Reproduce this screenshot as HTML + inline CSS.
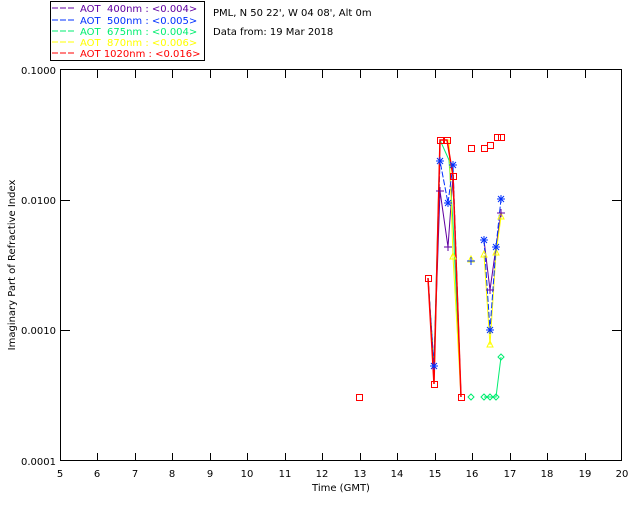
<!DOCTYPE html>
<html><head><meta charset="utf-8"><style>
html,body{margin:0;padding:0;background:#fff;}
svg{display:block;font-family:"DejaVu Sans","Liberation Sans",sans-serif;}
</style></head><body>
<svg width="640" height="512" viewBox="0 0 640 512" xmlns="http://www.w3.org/2000/svg">
<rect width="640" height="512" fill="#fff"/>
<rect x="50.5" y="1.5" width="154" height="59" fill="none" stroke="#000" stroke-width="1"/>
<g font-size="10">
<line x1="52" y1="8" x2="74" y2="8" stroke="#6000a0" stroke-dasharray="6,2"/>
<text x="80" y="12" fill="#6000a0" xml:space="preserve">AOT  400nm : &lt;0.004&gt;</text>
<line x1="52" y1="20" x2="74" y2="20" stroke="#0030ff" stroke-dasharray="6,2"/>
<text x="80" y="24" fill="#0030ff" xml:space="preserve">AOT  500nm : &lt;0.005&gt;</text>
<line x1="52" y1="31" x2="74" y2="31" stroke="#00ee70" stroke-dasharray="6,2"/>
<text x="80" y="35" fill="#00ee70" xml:space="preserve">AOT  675nm : &lt;0.004&gt;</text>
<line x1="52" y1="42" x2="74" y2="42" stroke="#ffff00" stroke-dasharray="6,2"/>
<text x="80" y="46" fill="#ffff00" xml:space="preserve">AOT  870nm : &lt;0.006&gt;</text>
<line x1="52" y1="53" x2="74" y2="53" stroke="#ff0000" stroke-dasharray="6,2"/>
<text x="80" y="57" fill="#ff0000" xml:space="preserve">AOT 1020nm : &lt;0.016&gt;</text>
</g>
<g font-size="10" fill="#000">
<text x="213" y="16">PML, N 50 22', W 04 08', Alt 0m</text>
<text x="213" y="35">Data from: 19 Mar 2018</text>
</g>
<rect x="60.5" y="69.5" width="561" height="391" fill="none" stroke="#000" stroke-width="1"/>
<g stroke="#000" stroke-width="1">
<path d="M97.5 461v-8M135.5 461v-8M172.5 461v-8M210.5 461v-8M247.5 461v-8M285.5 461v-8M322.5 461v-8M360.5 461v-8M397.5 461v-8M435.5 461v-8M472.5 461v-8M510.5 461v-8M547.5 461v-8M585.5 461v-8"/>
<path d="M97.5 70v8M135.5 70v8M172.5 70v8M210.5 70v8M247.5 70v8M285.5 70v8M322.5 70v8M360.5 70v8M397.5 70v8M435.5 70v8M472.5 70v8M510.5 70v8M547.5 70v8M585.5 70v8"/>
<path d="M60 200.5h10M60 330.5h10M622 200.5h-10M622 330.5h-10"/>
</g>
<g font-size="10" fill="#000" text-anchor="middle">
<text x="60" y="477">5</text><text x="97" y="477">6</text><text x="135" y="477">7</text><text x="172" y="477">8</text><text x="210" y="477">9</text><text x="247" y="477">10</text><text x="285" y="477">11</text><text x="322" y="477">12</text><text x="360" y="477">13</text><text x="397" y="477">14</text><text x="435" y="477">15</text><text x="472" y="477">16</text><text x="510" y="477">17</text><text x="547" y="477">18</text><text x="585" y="477">19</text><text x="622" y="477">20</text>
<text x="341" y="491">Time (GMT)</text>
</g>
<g font-size="10" fill="#000" text-anchor="end">
<text x="56" y="74">0.1000</text><text x="56" y="204">0.0100</text><text x="56" y="334">0.0010</text><text x="56" y="465">0.0001</text>
</g>
<text transform="translate(15,265) rotate(-90)" font-size="10" text-anchor="middle" fill="#000">Imaginary Part of Refractive Index</text>
<g fill="none" stroke-width="1">
<polyline stroke="#6000a0" points="428,278 434,366 440,191 448,247 453,176 461,397"/>
<polyline stroke="#6000a0" points="484,240 490,290 496,247 501,213"/>
<polyline stroke="#00ee70" points="428,278 434,366 440,140 449,160 453,223 461,397"/>
<polyline stroke="#00ee70" points="484,397 496,397 501,357"/>
<polyline stroke="#ffff00" points="428,278 434,384 440,140 449,140 453,257 461,397"/>
<polyline stroke="#ffff00" points="484,255 490,345 496,253 501,217"/>
<polyline stroke="#0030ff" stroke-dasharray="6,2" points="428,278 434,366 440,161 448,203 453,165 461,397"/>
<polyline stroke="#0030ff" stroke-dasharray="6,2" points="484,240 490,330 496,247 501,199"/>
<polyline stroke="#ff0000" stroke-width="1.5" points="428,278 434,384 440,140 447,140 453,176 461,397"/>
</g>
<path fill="none" stroke="#ff0000" stroke-width="1" d="M356.5 394.5h6v6h-6z M425.5 275.5h6v6h-6z M431.5 381.5h6v6h-6z M437.5 137.5h6v6h-6z M444.5 137.5h6v6h-6z M450.5 173.5h6v6h-6z M458.5 394.5h6v6h-6z M468.5 145.5h6v6h-6z M481.5 145.5h6v6h-6z M487.5 142.5h6v6h-6z M494.5 134.5h6v6h-6z M498.5 134.5h6v6h-6z"/>
<g fill="none" stroke="#00ee70" stroke-width="1">
<path d="M471 394l3 3-3 3-3-3z M484 394l3 3-3 3-3-3z M490 394l3 3-3 3-3-3z M496 394l3 3-3 3-3-3z M501 354l3 3-3 3-3-3z"/>
</g>
<g fill="none" stroke="#ffff00" stroke-width="1">
<path d="M471 256l3 6h-6z M484 251l3 6h-6z M496 249l3 6h-6z M501 213l3 6h-6z M490 341l3 6h-6z M453 253l3 6h-6z"/>
</g>
<g stroke="#0030ff" stroke-width="1">
<path d="M436 161h8M440 157v8M437 158l6 6M443 158l-6 6"/>
<path d="M449 165h8M453 161v8M450 162l6 6M456 162l-6 6"/>
<path d="M444 203h8M448 199v8M445 200l6 6M451 200l-6 6"/>
<path d="M430 366h8M434 362v8M431 363l6 6M437 363l-6 6"/>
<path d="M467 261h8M471 257v8"/>
<path d="M480 240h8M484 236v8M481 237l6 6M487 237l-6 6"/>
<path d="M492 247h8M496 243v8M493 244l6 6M499 244l-6 6"/>
<path d="M486 330h8M490 326v8M487 327l6 6M493 327l-6 6"/>
<path d="M497 199h8M501 195v8M498 196l6 6M504 196l-6 6"/>
</g>
<g stroke="#6000a0" stroke-width="1">
<path d="M436 191h8M440 187v8M444 247h8M448 243v8M486 290h8M490 286v8M497 213h8M501 209v8"/>
</g>
</svg>
</body></html>
